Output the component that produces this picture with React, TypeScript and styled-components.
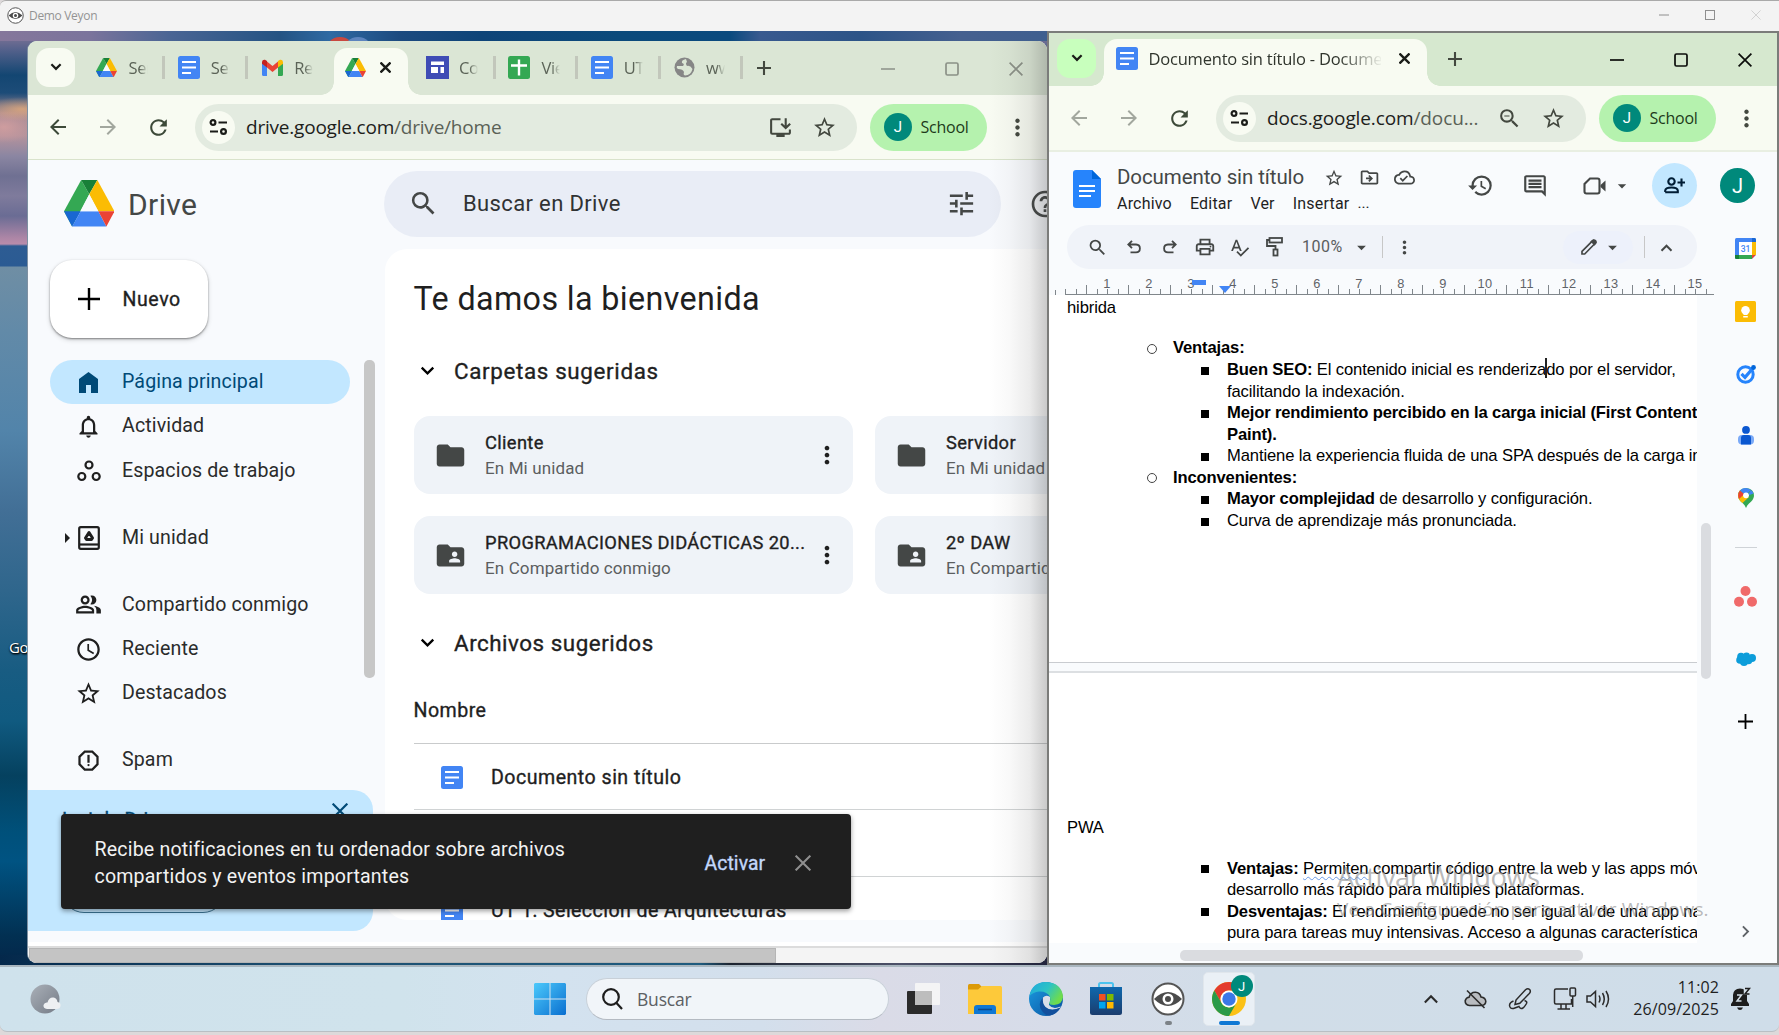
import React from 'react';
import styled, { createGlobalStyle, css } from 'styled-components';
import {
  MdSearch, MdTune, MdNotificationsNone, MdAccessTime, MdStarBorder, MdFolder, MdFolderShared,
  MdMoreVert, MdHelpOutline, MdHistory,
  MdOutlineComment, MdOutlinePrint, MdSpellcheck, MdArrowDropDown, MdArrowBack, MdArrowForward,
  MdRefresh, MdZoomOut, MdOutlineReport, MdOutlineDriveFileMove, MdOutlineCloudDone,
  MdInstallDesktop, MdOutlinePeopleAlt, MdChevronRight,
} from 'react-icons/md';

const UI = "'Open Sans', 'Noto Sans', sans-serif";
const GS = "Roboto, 'Noto Sans', sans-serif";
const ARIAL = "'Liberation Sans', Arial, sans-serif";

const Global = createGlobalStyle`
  * { box-sizing: border-box; }
  body { margin: 0; overflow: hidden; font-family: ${GS}; }
  svg { display: block; flex: none; }
`;

/* ---------- primitives ---------- */

const Screen = styled.div`
  width: 1779px; height: 1035px; display: flex; flex-direction: column; overflow: hidden; background: #ddd9da;
`;
const Slot = styled.div<{ $w: number; $c?: string }>`
  flex: none; width: ${p => p.$w}px; display: flex; align-items: center; justify-content: center;
  color: ${p => p.$c || 'inherit'};
`;
const Gap = styled.div<{ $w: number }>`flex: none; width: ${p => p.$w}px;`;
const Label = styled.span<{ $s: number; $ls?: number; $c?: string; $f?: string; $dy?: number }>`
  font-family: ${p => p.$f || GS}; font-size: ${p => p.$s}px; letter-spacing: ${p => p.$ls || 0}px;
  color: ${p => p.$c || '#1f1f1f'}; font-weight: 400; white-space: nowrap; line-height: 1.25;
  padding-top: ${p => p.$dy || 0}px;
`;
/* sits between the regular and medium weights */
const Medium = styled(Label)`-webkit-text-stroke: 0.35px currentColor;`;

/* ---------- viewer title bar ---------- */

const TitleBar = styled.header`
  flex: none; height: 31px; display: flex; align-items: center; background: #f3f3f3;
  border-top: 1px solid #a9a9a9; border-radius: 6px 0 0 0; padding: 0 0 2px 7px;
`;
const Spacer = styled.div`flex: 1;`;

/* ---------- desktop ---------- */

const Desktop = styled.main`
  flex: none; height: 934px; position: relative; overflow: hidden;
  background:
    radial-gradient(ellipse 40px 12px at 22px 78px, rgba(233,174,120,.75), transparent),
    radial-gradient(ellipse 30px 16px at 4px 96px, rgba(214,160,160,.8), transparent),
    linear-gradient(180deg, #8a7898 0, #56628c 18px, #134672 44px, #1d4c78 62px, #a98a94 82px, #b4929c 105px,
      #8b86a2 125px, #6f7092 145px, #7f7b9c 165px, #6a6c94 185px, #ad86a6 207px, #b98cab 213px, #2d5c93 215px,
      #2b5b93 235px, #6f8ea4 236px, #628aa8 300px, #5284aa 400px, #426f96 480px, #2f668c 560px, #185c82 640px,
      #105a80 690px, #05415f 745px, #00507a 800px, #005382 830px, #023052 905px, #04264a 934px);
`;
const SkyStrip = styled.div`
  height: 10px;
  background: linear-gradient(90deg, #85779b 0, #7b749c 90px, #4a6594 170px, #245383 280px, #2f6aa3 330px, #1c4a7f 400px,
    #0e4478 480px, #0b4a7b 620px, #0a4a7e 730px, #38598f 760px, #2c5487 860px, #45608f 960px, #3f5f8f 1049px);
`;
const FloorStrip = styled.div`
  position: absolute; left: 0; bottom: 0; width: 1047px; height: 10px;
  background: linear-gradient(90deg, #04284b, #1d4f70 300px, #1f5b7e 700px, #1d2430 730px, #4d5169 900px, #22243c 1047px);
`;
const ShortcutPeek = styled.div<{ $x: number; $c: string }>`
  position: absolute; left: ${p => p.$x}px; top: 6px; width: 30px; height: 30px; border-radius: 50%; background: ${p => p.$c};
`;
const ShortcutName = styled.span`
  position: absolute; left: 9px; top: 606px; font: 15px ${UI}; color: #fff; letter-spacing: -0.3px;
  text-shadow: 0 1px 2px #000, 1px 1px 2px #000;
`;

/* ---------- browser chrome ---------- */

const BrowserWindow = styled.section<{ $front?: boolean }>`
  position: absolute; display: flex; flex-direction: column; overflow: hidden;
  ${p => p.$front
    ? css`left: 1047px; top: 0; width: 732px; height: 934px; border: 2px solid #7b7c7a;`
    : css`left: 28px; top: 10px; width: 1019px; height: 922px; border-radius: 9px 9px 9px 9px; box-shadow: -1px 0 0 #7e90a2;`}
  background: #f8fbf2;
`;
const EdgeShade = styled.div`
  position: absolute; right: 0; top: 0; width: 58px; height: 100%; pointer-events: none;
  background: linear-gradient(90deg, transparent, rgba(60,60,60,.03) 35%, rgba(60,60,60,.1) 70%, rgba(60,60,60,.27));
`;
const TabStrip = styled.div<{ $front?: boolean }>`
  flex: none; height: ${p => (p.$front ? 53 : 54)}px; display: flex;
  background: ${p => (p.$front ? '#d6e8cf' : '#dbe6d5')};
  padding-top: ${p => (p.$front ? 6 : 7)}px; padding-left: 8px;
`;
const TabSearch = styled.div<{ $front?: boolean }>`
  flex: none; width: 39px; height: 39px; border-radius: 13px; display: grid; place-items: center;
  background: ${p => (p.$front ? '#c8ffbd' : '#f8fbf2')}; color: #1a1c18;
`;
const Tab = styled.div`
  flex: none; width: 82.35px; height: 39px; display: flex; align-items: center; padding-left: 15px;
`;
const FadeText = styled.div<{ $w: number }>`
  width: ${p => p.$w}px; overflow: hidden; margin-left: 11px; padding-top: 2px;
  mask-image: linear-gradient(90deg, #000 55%, transparent 100%);
`;
const LongFade = styled(FadeText)`mask-image: linear-gradient(90deg, #000 82%, transparent 101%);`;
const TabDivider = styled.i`width: 3px; height: 23px; background: #c2c7bb; margin-left: auto; margin-right: -2.5px;`;
const ActiveTab = styled.div<{ $w: number; $ml: number; $mr: number }>`
  position: relative; flex: none; width: ${p => p.$w}px; margin-left: ${p => p.$ml}px; margin-right: ${p => p.$mr}px;
  height: 100%; background: #f8fbf2; border-radius: 13px 13px 0 0;
  display: flex; align-items: center; padding: 0 0 8px 11.5px;
  &::before, &::after { content: ''; position: absolute; bottom: 0; width: 13px; height: 13px; }
  &::before { left: -13px; background: radial-gradient(circle at 0 0, transparent 12.5px, #f8fbf2 13px); }
  &::after { right: -13px; background: radial-gradient(circle at 100% 0, transparent 12.5px, #f8fbf2 13px); }
`;
const TabTools = styled.div`display: flex; align-items: center; height: 39px;`;
const WindowButtons = styled.div<{ $c: string }>`
  margin-left: auto; display: flex; align-items: center; height: 41px; color: ${p => p.$c};
`;
const AddressRow = styled.div<{ $front?: boolean }>`
  flex: none; height: ${p => (p.$front ? 66 : 65)}px; display: flex; align-items: center; background: #f8fbf2;
  border-bottom: ${p => (p.$front ? '2px solid #e9efe2' : '1px solid #d9e3cb')}; color: #43483f;
`;
const Omnibox = styled.div<{ $w: number }>`
  flex: none; width: ${p => p.$w}px; height: 47px; border-radius: 24px; background: #e3ebe0; display: flex; align-items: center; padding-left: 7px;
`;
const UrlPath = styled.span`color: #5a6156;`;
const SiteChip = styled.div`
  flex: none; width: 33px; height: 33px; border-radius: 50%; background: #f8fbf2; display: grid; place-items: center; margin-right: 11px;
`;
const Profile = styled.div`
  flex: none; width: 117px; height: 47px; border-radius: 24px; background: #b5f2ae; display: flex; align-items: center; padding-left: 14px; gap: 8.5px;
`;
const Avatar = styled.div<{ $d: number; $s: number }>`
  flex: none; width: ${p => p.$d}px; height: ${p => p.$d}px; border-radius: 50%; background: #00897b; color: #fff;
  font: 400 ${p => p.$s}px ${GS}; display: grid; place-items: center;
`;

/* ---------- icons ---------- */

const DriveLogo = ({ w }: { w: number }) => (
  <svg width={w} height={w * 0.92} viewBox="0 0 50 46">
    <path d="M17 0 L25 14 L8 46 L0 31 Z" fill="#34a853" />
    <path d="M17 0 H33 L25 14 Z" fill="#188038" />
    <path d="M33 0 L50 31 H34 L25 14 Z" fill="#fbbc04" />
    <path d="M0 31 H16.5 L8 46 Z" fill="#1967d2" />
    <path d="M16.5 31 H34 L42 46 H8 Z" fill="#4285f4" />
    <path d="M34 31 H50 L42 46 Z" fill="#ea4335" />
    <path d="M25 14 L34 31 H16.5 Z" fill="#f8fafd" />
  </svg>
);
const DocsTile = () => (
  <svg width="22" height="23" viewBox="0 0 22 23">
    <rect width="22" height="23" rx="2.5" fill="#4285f4" />
    <path d="M4 6H18M4 11.5H18M4 17H13" stroke="#fff" strokeWidth="2.2" />
  </svg>
);
const GmailIcon = () => (
  <svg width="21" height="17" viewBox="0 0 21 17">
    <path d="M0 3V15.5Q0 17 1.5 17H5V7Z" fill="#4285f4" />
    <path d="M21 3V15.5Q21 17 19.5 17H16V7Z" fill="#34a853" />
    <path d="M5 2.5L10.5 7L16 2.5V8.5L10.5 13L5 8.5Z" fill="#ea4335" />
    <path d="M0 3Q.3 .3 3 .7L5 2V8.5L0 4.8Z" fill="#c5221f" />
    <path d="M21 3Q20.7 .3 18 .7L16 2V8.5L21 4.8Z" fill="#fbbc04" />
  </svg>
);
const SitesIcon = () => (
  <svg width="23" height="23" viewBox="0 0 23 23">
    <rect width="23" height="23" fill="#3f4cb5" />
    <path d="M5 5.5H18V9H5ZM5 11H12V17H5ZM14.5 11H18V17H14.5Z" fill="#fff" />
  </svg>
);
const SheetsIcon = () => (
  <svg width="22" height="23" viewBox="0 0 22 23">
    <rect width="22" height="23" rx="2.5" fill="#34a853" />
    <path d="M11 3.5V19.5M3 9.5H19" stroke="#fff" strokeWidth="2.4" />
  </svg>
);
const GlobeIcon = () => (
  <svg width="21" height="21" viewBox="0 0 21 21">
    <circle cx="10.5" cy="10.5" r="10" fill="#868686" />
    <path d="M12 2Q7 3 8 6Q11 7 9 9H3Q2 11 4 12Q9 12 10 15Q9 18 11 18.5Q17 18 18.5 12Q16 8 13 9Q11 6 13 5Z" fill="#dbe6d5" />
  </svg>
);
const SiteSettings = () => (
  <svg width="19" height="18" viewBox="0 0 19 18" fill="none" stroke="#1a1c18" strokeWidth="2.2">
    <circle cx="4" cy="4.5" r="2.4" /><path d="M9.5 4.5H18M1 13.5H9" /><circle cx="14.5" cy="13.5" r="2.4" />
  </svg>
);
const PlusIcon = ({ s, sw }: { s: number; sw: number }) => (
  <svg width={s} height={s} viewBox={`0 0 ${s} ${s}`}><path d={`M0 ${s / 2}H${s}M${s / 2} 0V${s}`} stroke="currentColor" strokeWidth={sw} /></svg>
);
const MinIcon = () => <svg width="14" height="14" viewBox="0 0 14 14"><path d="M0 7H14" stroke="currentColor" strokeWidth="1.7" /></svg>;
const MaxIcon = () => <svg width="14" height="14" viewBox="0 0 14 14"><rect x="1" y="1" width="12" height="12" rx="1.5" fill="none" stroke="currentColor" strokeWidth="1.7" /></svg>;
const XIcon = ({ s = 14, sw = 1.7 }: { s?: number; sw?: number }) => (
  <svg width={s} height={s} viewBox="0 0 14 14"><path d="M.6 .6L13.4 13.4M13.4 .6L.6 13.4" stroke="currentColor" strokeWidth={sw} /></svg>
);
const Chevron = ({ w = 12, sw = 2.4, up = false }: { w?: number; sw?: number; up?: boolean }) => (
  <svg width={w} height={w * 0.7} viewBox="0 0 14 10"><path d={up ? 'M1.5 8.5L7 3L12.5 8.5' : 'M1.5 1.5L7 7L12.5 1.5'} stroke="currentColor" strokeWidth={sw} fill="none" /></svg>
);
const EyeIcon = ({ w, h }: { w: number; h: number }) => (
  <svg width={w} height={h} viewBox="0 0 34 34">
    <circle cx="17" cy="17" r="15.5" fill="#fff" stroke="#555" strokeWidth="2" />
    <path d="M3 17Q10 10 17 10Q24 10 31 17Q24 24 17 24Q10 24 3 17Z" fill="#4b4b4b" />
    <circle cx="17" cy="17" r="5.5" fill="#fff" /><circle cx="17" cy="17" r="3" fill="#4b4b4b" />
  </svg>
);
const HomeIcon = () => (
  <svg width="19" height="21" viewBox="0 0 19 21"><path d="M0 7L9.5 0L19 7V21H12V13H7V21H0Z" fill="#004a77" /></svg>
);
const SpacesIcon = () => (
  <svg width="24" height="22" viewBox="0 0 24 22" fill="none" stroke="#1f1f1f" strokeWidth="2.2">
    <circle cx="12" cy="5" r="3.5" /><circle cx="4.8" cy="16.5" r="3.5" /><circle cx="19.2" cy="16.5" r="3.5" />
  </svg>
);
const MyDriveIcon = () => (
  <svg width="22" height="24" viewBox="0 0 22 24" fill="none" stroke="#1f1f1f" strokeWidth="2.2">
    <rect x="1.2" y="1.2" width="19.6" height="21.6" rx="1.5" /><path d="M1 18.5H21" />
    <path d="M11 6.5L7.5 12L8.5 13.5H13.5L14.5 12Z" strokeWidth="3" strokeLinejoin="round" />
  </svg>
);
const ExpandIcon = () => <svg width="5" height="10" viewBox="0 0 5 10"><path d="M0 0L5 5L0 10Z" fill="#1f1f1f" /></svg>;
const DocsFile = () => (
  <svg width="28" height="38" viewBox="0 0 28 38">
    <path d="M3 0H19L28 9V35Q28 38 25 38H3Q0 38 0 35V3Q0 0 3 0Z" fill="#2684fc" />
    <path d="M19 0L28 9H19Z" fill="#0066da" />
    <path d="M6 16H22M6 21H22M6 26H18" stroke="#fff" strokeWidth="2" />
  </svg>
);
const CameraIcon = () => (
  <svg width="23" height="18" viewBox="0 0 23 18" fill="none" stroke="#444746" strokeWidth="2.1">
    <path d="M7 1.5H14.5Q16.5 1.5 16.5 3.5V14.5Q16.5 16.5 14.5 16.5H3.5Q1.5 16.5 1.5 14.5V7Z" />
    <path d="M17.5 8L22.5 3.5V14.5L17.5 10Z" fill="#444746" stroke="none" />
  </svg>
);
const AddPerson = () => (
  <svg width="21" height="17" viewBox="0 0 21 17" fill="none" stroke="#001d35" strokeWidth="2.1">
    <circle cx="7.5" cy="4.5" r="3.2" /><path d="M1.2 15V13.5Q1.5 10.5 7.5 10.5Q13.5 10.5 13.8 13.5V15.2H1.2M17.5 1.5V9.5M13.5 5.5H21" />
  </svg>
);
const UndoIcon = ({ flip }: { flip?: boolean }) => (
  <svg width="14" height="14" viewBox="0 0 14 14" fill="none" stroke="#444746" strokeWidth="1.8" transform={flip ? 'scale(-1 1)' : undefined}>
    <path d="M5 .8L1.3 4.5L5 8.2M1.5 4.5H9Q12.9 4.7 12.9 8.4Q12.9 12.2 9 12.3H3.5" />
  </svg>
);
const RollerIcon = () => (
  <svg width="17" height="20" viewBox="0 0 17 20" fill="none" stroke="#444746" strokeWidth="1.8">
    <rect x="3.5" y="1" width="12.5" height="4.5" /><path d="M3.5 3H1V9H9.5V12" /><rect x="7.5" y="12.5" width="4" height="6" />
  </svg>
);
const PencilIcon = () => (
  <svg width="16" height="16" viewBox="0 0 16 16" fill="none" stroke="#444746" strokeWidth="1.7">
    <path d="M1 15V12.3L11.5 1.8Q12.5 .8 13.7 1.9Q15 3.2 14.2 4.3L3.7 15Z" /><path d="M10.5 2.5L13.5 5.5L15 3.5Q15 1 12.5 1Z" fill="#444746" />
  </svg>
);
const CalendarIcon = () => (
  <svg width="21" height="21" viewBox="0 0 21 21">
    <rect width="21" height="21" rx="1.5" fill="#4285f4" /><path d="M17 4H21V17H17Z" fill="#fbbc04" /><path d="M17 0H19.5Q21 0 21 1.5V4H17Z" fill="#1967d2" />
    <path d="M4 17H17V21H4Z" fill="#34a853" /><path d="M0 17H4V21H1.5Q0 21 0 19.5Z" fill="#188038" /><path d="M17 17H21L17 21Z" fill="#ea4335" /><path d="M21 17V21H17Z" fill="#f9fbfd" />
    <rect x="4" y="4" width="13" height="13" fill="#fff" />
    <text x="10.5" y="13.6" fontSize="8.5" fontFamily="Roboto, sans-serif" fontWeight="500" textAnchor="middle" fill="#4285f4">31</text>
  </svg>
);
const KeepIcon = () => (
  <svg width="21" height="21" viewBox="0 0 21 21">
    <rect width="21" height="21" rx="1.5" fill="#fbbc04" /><circle cx="10.5" cy="9.3" r="4.3" fill="#fff" /><path d="M8.5 12H12.5V14H8.5ZM8.2 15H12.8V16.5H8.2Z" fill="#fff" />
  </svg>
);
const TasksIcon = () => (
  <svg width="20" height="20" viewBox="0 0 20 20">
    <circle cx="9.5" cy="10.5" r="7.7" fill="none" stroke="#2684fc" strokeWidth="3" />
    <path d="M5.5 9.8L9 13.3L17.5 3.5" fill="none" stroke="#2684fc" strokeWidth="3.2" /><circle cx="17.5" cy="3.5" r="2.4" fill="#0066da" />
  </svg>
);
const ContactIcon = () => (
  <svg width="16" height="19" viewBox="0 0 16 19">
    <rect x="0" y="9" width="16" height="9.5" rx="4" fill="#7baaf7" /><path d="M3 18.5V12Q3 9 6 9H10Q13 9 13 12V18.5Z" fill="#0b57d0" /><circle cx="8" cy="3.9" r="3.9" fill="#0b57d0" />
  </svg>
);
const MapsIcon = () => (
  <svg width="16" height="20" viewBox="0 0 16 20">
    <path d="M8 0Q16 .5 16 8Q15.5 12 11 15.5Q9 17 8 20Q7 17 5 15.5Q.5 12 0 8Q0 .5 8 0Z" fill="#34a853" />
    <path d="M2 2.5L5.5 5.5L11 9L4.5 15Q.5 12 0 8Q0 5 2 2.5Z" fill="#fbbc04" /><path d="M2 2.5L6.5 6L1 11Q-1 6 2 2.5Z" fill="#ea4335" />
    <path d="M2 2.5Q7 -2 13 2L8 7L5.5 5.5Z" fill="#4285f4" /><path d="M13 2Q15 3.5 15.5 5.5L9 8Z" fill="#4285f4" /><circle cx="8" cy="7.3" r="2.9" fill="#fff" />
  </svg>
);
const AsanaIcon = () => (
  <svg width="23" height="21" viewBox="0 0 23 21" fill="#f06a6a"><circle cx="11.5" cy="5" r="5" /><circle cx="5" cy="15.8" r="5" /><circle cx="18" cy="15.8" r="5" /></svg>
);
const SalesforceIcon = () => (
  <svg width="20" height="14" viewBox="0 0 20 14" fill="#0d9dda"><circle cx="5" cy="4.5" r="3.8" /><circle cx="10.5" cy="3.8" r="3.4" /><circle cx="16" cy="6" r="4" /><circle cx="4" cy="8" r="3.8" /><circle cx="8" cy="10" r="4" /><circle cx="12.5" cy="8.5" r="3.8" /></svg>
);

/* ---------- drive page ---------- */

const DriveHeader = styled.div`
  flex: none; height: 89px; background: #f8fafd; display: flex; align-items: center; padding-bottom: 2px; color: #444746; overflow: hidden;
`;
const DriveSearch = styled.div`
  flex: none; width: 617px; height: 66px; border-radius: 33px; background: #e9edf6; display: flex; align-items: center;
`;
const HelpSlot = styled(Slot)`& > svg { margin-left: 12px; }`;
const DriveBody = styled.div`flex: none; height: 693px; display: flex; background: #f8fafd;`;
const Sidebar = styled.aside`flex: none; width: 357px; padding-top: 11px; display: flex; flex-direction: column;`;
const NewButton = styled.div`
  flex: none; margin-left: 22px; width: 158px; height: 78px; border-radius: 22px; background: #fff; display: flex; align-items: center;
  box-shadow: 0 1px 2px rgba(0,0,0,.42), 0 2px 5px rgba(0,0,0,.16); padding-left: 20px;
`;
const NavArea = styled.div`flex: none; height: 430px; margin-top: 22px; padding-left: 22px; display: flex; overflow: hidden;`;
const NavList = styled.nav`flex: none; width: 300px; display: flex; flex-direction: column; gap: 22.5px;`;
const NavItem = styled.div<{ $on?: boolean }>`
  position: relative; height: 44.4px; border-radius: 23px; display: flex; align-items: center; padding-left: 19.7px;
  background: ${p => (p.$on ? '#c2e7ff' : 'transparent')};
`;
const ExpandMark = styled.div`position: absolute; left: 15px; top: 17px;`;
const NavThumb = styled.div`margin-left: 14px; width: 11px; height: 318px; border-radius: 5px; background: #c7c7c7;`;
const PromoCard = styled.div`
  flex: none; width: 345px; height: 141px; border-radius: 0 20px 20px 0; background: #c2e7ff; padding: 17px 25px 0 34px; color: #004a77;
  display: flex; justify-content: space-between; position: relative;
  & > svg { margin-top: -4px; }
`;
const PromoButton = styled.div`position: absolute; left: 34px; bottom: 18px; width: 163px; height: 44px; border-radius: 22px; border: 1px solid #39708f;`;
const Panel = styled.div`
  flex: none; width: 662px; height: 671px; background: #fff; border-radius: 22px 0 0 22px; padding-left: 28.5px; overflow: hidden;
`;
const Welcome = styled.div`height: 102px; padding-bottom: 2px; display: flex; align-items: center;`;
const SectionHead = styled.div`height: 40px; display: flex; align-items: center;`;
const CardGrid = styled.div`
  margin: 25px 0 29px; display: grid; grid-template-columns: 439px 439px; gap: 22px; grid-auto-rows: 78px; width: 900px;
`;
const FolderCard = styled.div`
  border-radius: 16px; background: #eff3f8; display: flex; align-items: center; padding-left: 19.5px;
`;
const CardText = styled.div`flex: none; display: flex; flex-direction: column; gap: 3px; width: 328px; margin-left: 18px; padding-top: 1px;`;
const ColumnHead = styled.div`height: 81px; padding-top: 16px; display: flex; align-items: center; border-bottom: 1px solid #c9cbcc;`;
const FileRow = styled.div`
  height: 66.4px; display: flex; align-items: center; border-bottom: 1px solid #d0d3d4; padding: 2px 0 0 27px; gap: 28.5px;
`;
const PageFoot = styled.div`flex: none; height: 4px; background: #fff;`;
const HScroll = styled.div`
  flex: none; height: 17px; border-top: 2px solid #dcdcdc; background: #f4f4f4; padding: 0 0 0 1px;
  & > i { display: block; width: 747px; height: 15px; background: #c4c4c4; border: 1px solid #b5b5b5; }
`;
const Toast = styled.div`
  position: absolute; left: 33px; top: 773px; width: 789.5px; height: 94.5px; border-radius: 4px; background: #1f1f1f;
  box-shadow: 0 2px 5px rgba(0,0,0,.4); display: flex; align-items: center; padding: 3px 0 0 33.5px;
`;
const ToastText = styled.div`flex: none; width: 610px; display: flex; flex-direction: column; & > span { line-height: 27px; }`;

const navGroups = [
  [
    { t: 'Página principal', i: <HomeIcon />, on: true },
    { t: 'Actividad', i: <MdNotificationsNone size={27} /> },
    { t: 'Espacios de trabajo', i: <SpacesIcon /> },
  ],
  [{ t: 'Mi unidad', i: <MyDriveIcon />, ex: true }],
  [
    { t: 'Compartido conmigo', i: <MdOutlinePeopleAlt size={27} /> },
    { t: 'Reciente', i: <MdAccessTime size={27} /> },
    { t: 'Destacados', i: <MdStarBorder size={27} /> },
  ],
  [{ t: 'Spam', i: <MdOutlineReport size={27} /> }],
] as { t: string; i: React.ReactNode; on?: boolean; ex?: boolean }[][];

const folders = [
  { t: 'Cliente', s: 'En Mi unidad' },
  { t: 'Servidor', s: 'En Mi unidad' },
  { t: 'PROGRAMACIONES DIDÁCTICAS 20...', s: 'En Compartido conmigo', shared: true },
  { t: '2º DAW', s: 'En Compartido conmigo', shared: true },
] as { t: string; s: string; shared?: boolean }[];

const SmallTab = ({ icon, text, divider = true }: { icon: React.ReactNode; text: string; divider?: boolean }) => (
  <Tab>
    <Slot $w={22}>{icon}</Slot>
    <FadeText $w={19}><Label $f={UI} $s={16.5} $ls={-0.3} $c="#5b6357">{text}</Label></FadeText>
    {divider && <TabDivider />}
  </Tab>
);

const School = () => (
  <Profile>
    <Avatar $d={28} $s={15}>J</Avatar>
    <Label $f={UI} $s={16} $ls={-0.25} $c="#1d3a1a">School</Label>
  </Profile>
);

const DriveWindow = () => (
  <BrowserWindow>
    <TabStrip>
      <TabSearch><Chevron w={12} sw={2.6} /></TabSearch>
      <Gap $w={5.5} />
      <SmallTab icon={<DriveLogo w={21} />} text="Ser" />
      <SmallTab icon={<DocsTile />} text="Ser" />
      <Gap $w={1} />
      <SmallTab icon={<GmailIcon />} text="Re" divider={false} />
      <ActiveTab $w={74} $ml={5} $mr={3.5}>
        <DriveLogo w={21} /><Gap $w={12} /><Slot $w={14} $c="#1a1c18"><XIcon s={11} sw={3} /></Slot>
      </ActiveTab>
      <SmallTab icon={<SitesIcon />} text="Co" />
      <SmallTab icon={<SheetsIcon />} text="Vie" />
      <SmallTab icon={<DocsTile />} text="UT" />
      <SmallTab icon={<GlobeIcon />} text="ww" />
      <TabTools><Slot $w={47} $c="#43483f"><PlusIcon s={14} sw={2.1} /></Slot></TabTools>
      <WindowButtons $c="#8b9187">
        <Slot $w={64}><MinIcon /></Slot><Slot $w={64}><MaxIcon /></Slot><Slot $w={63}><XIcon /></Slot>
      </WindowButtons>
    </TabStrip>
    <AddressRow>
      <Gap $w={5} />
      <Slot $w={50} $c="#3d4a39"><MdArrowBack size={24} /></Slot>
      <Slot $w={50} $c="#a2a79e"><MdArrowForward size={24} /></Slot>
      <Slot $w={50} $c="#3d4a39"><MdRefresh size={25} /></Slot>
      <Gap $w={12} />
      <Omnibox $w={662}>
        <SiteChip><SiteSettings /></SiteChip>
        <Label $f={UI} $s={19} $ls={-0.21} $dy={1} $c="#1d211b">drive.google.com<UrlPath>/drive/home</UrlPath></Label>
        <Spacer />
        <Slot $w={44}><MdInstallDesktop size={25} /></Slot><Slot $w={44}><MdStarBorder size={25} /></Slot><Gap $w={11} />
      </Omnibox>
      <Gap $w={13} />
      <School />
      <Slot $w={60}><MdMoreVert size={27} /></Slot>
    </AddressRow>
    <DriveHeader>
      <Gap $w={35.5} /><DriveLogo w={50.5} /><Gap $w={14} />
      <Label $s={30} $ls={0.4} $dy={3} $c="#444746">Drive</Label>
      <Spacer />
      <DriveSearch>
        <Gap $w={24.5} /><Slot $w={30}><MdSearch size={31} /></Slot><Gap $w={24.5} />
        <Label $s={22} $ls={0.36} $dy={1} $c="#303233">Buscar en Drive</Label>
        <Spacer /><MdTune size={31} /><Gap $w={24} />
      </DriveSearch>
      <Gap $w={29} /><HelpSlot $w={17}><MdHelpOutline size={32} /></HelpSlot>
    </DriveHeader>
    <DriveBody>
      <Sidebar>
        <NewButton>
          <Slot $w={38}><PlusIcon s={22} sw={2.4} /></Slot><Gap $w={14.5} />
          <Medium $s={19.5} $ls={0.6} $dy={2}>Nuevo</Medium>
        </NewButton>
        <NavArea>
          <NavList>
            {navGroups.map((g, k) => (
              <div key={k}>
                {g.map(n => (
                  <NavItem key={n.t} $on={n.on}>
                    {n.ex && <ExpandMark><ExpandIcon /></ExpandMark>}
                    <Slot $w={38} $c="#1f1f1f">{n.i}</Slot><Gap $w={14.3} />
                    <Label $s={19.6} $ls={0.12} $c={n.on ? '#004a77' : '#2a2b2b'}>{n.t}</Label>
                  </NavItem>
                ))}
              </div>
            ))}
          </NavList>
          <NavThumb />
        </NavArea>
        <PromoCard>
          <Medium $s={19} $ls={0.1} $c="#004a77">Instala Drive</Medium>
          <XIcon s={16} sw={1.9} />
          <PromoButton />
        </PromoCard>
      </Sidebar>
      <Panel>
        <Welcome><Label $s={32.3} $ls={0.36} $dy={1}>Te damos la bienvenida</Label></Welcome>
        <SectionHead><Slot $w={28}><Chevron w={15} sw={2.2} /></Slot><Gap $w={12.5} /><Medium $s={22.4} $ls={0.64}>Carpetas sugeridas</Medium></SectionHead>
        <CardGrid>
          {folders.map(f => (
            <FolderCard key={f.t}>
              <Slot $w={34} $c="#444746">{f.shared ? <MdFolderShared size={33} /> : <MdFolder size={33} />}</Slot>
              <CardText>
                <Medium $s={18.3} $ls={0.35}>{f.t}</Medium>
                <Label $s={17} $ls={0.12} $c="#5b5e5f">{f.s}</Label>
              </CardText>
              <Slot $w={28} $c="#1f1f1f"><MdMoreVert size={28} /></Slot>
            </FolderCard>
          ))}
        </CardGrid>
        <SectionHead><Slot $w={28}><Chevron w={15} sw={2.2} /></Slot><Gap $w={12.5} /><Medium $s={22.4} $ls={0.52}>Archivos sugeridos</Medium></SectionHead>
        <ColumnHead><Medium $s={19.6} $ls={0.45}>Nombre</Medium></ColumnHead>
        <FileRow><DocsTile /><Medium $s={19.6} $ls={0.48} $dy={1}>Documento sin título</Medium></FileRow>
        <FileRow />
        <FileRow><DocsTile /><Medium $s={19.6} $ls={0.42} $dy={1}>UT 1: Selección de Arquitecturas</Medium></FileRow>
      </Panel>
    </DriveBody>
    <PageFoot />
    <HScroll><i /></HScroll>
    <Toast>
      <ToastText>
        <Label $s={19.6} $ls={0.17} $c="#f2f2f2">Recibe notificaciones en tu ordenador sobre archivos</Label>
        <Label $s={19.6} $ls={0.17} $c="#f2f2f2">compartidos y eventos importantes</Label>
      </ToastText>
      <Medium $s={19.3} $ls={0.12} $dy={2} $c="#c2d7fb">Activar</Medium>
      <Spacer />
      <Slot $w={16} $c="#8f8f8f"><XIcon s={16} sw={1.8} /></Slot>
      <Gap $w={40} />
    </Toast>
    <EdgeShade />
  </BrowserWindow>
);

/* ---------- docs page ---------- */

const DocsHeader = styled.div`flex: none; height: 73px; background: #f9fbfd; display: flex; padding: 0 0 0 23.5px; color: #444746;`;
const DocsTitle = styled.div`flex: none; width: 330px; margin-left: 16px; padding-top: 10px;`;
const DocsTitleRow = styled.div`height: 31px; display: flex; align-items: center;`;
const MenuRow = styled.div`height: 21px; display: flex; align-items: center; gap: 18px; white-space: nowrap;`;
const MoreMenus = styled(Label)`margin-left: -10px;`;
const DocsActions = styled.div`margin-left: auto; display: flex; align-items: center; height: 67px;`;
const ShareButton = styled.div`width: 45px; height: 45px; border-radius: 50%; background: #c2e7ff; display: grid; place-items: center;`;
const DocsBody = styled.div`flex: none; height: 718px; display: flex; background: #f9fbfd;`;
const DocsMain = styled.div`flex: none; width: 666px;`;
const FormatBar = styled.div`
  margin-left: 17.5px; width: 630px; height: 43.5px; border-radius: 22px; background: #f0f3f9; display: flex; align-items: center; color: #444746;
  padding-top: 1px;
`;
const ModePill = styled.div`width: 70px; height: 33px; border-radius: 17px; background: #edf1fb; display: flex; align-items: center; padding-left: 18px; gap: 5px;`;
const BarDivider = styled.i`flex: none; width: 1.5px; height: 22px; background: #c7c7c7;`;
const Ruler = styled.div`position: relative; height: 26.5px; margin-left: 5.5px; display: flex; align-items: flex-end; overflow: hidden;`;
const RulerTrack = styled.div`display: flex; border-bottom: 1.5px solid #80868b; width: 649px; overflow: hidden;`;
const Cm = styled.div<{ $w: number }>`
  flex: none; width: ${p => p.$w}px; height: 24px; display: flex; flex-direction: column; justify-content: space-between; font: 12.8px ${ARIAL};
  color: #5f6368; text-align: center; letter-spacing: .5px;
  & > span { margin-top: 5px; line-height: 17px; }
`;
const Ticks = styled.div`
  display: flex; align-items: flex-end; height: 9px; margin-top: -7px;
  & > i { flex: none; width: 10.5px; height: 5px; border-left: 1px solid #80868b; }
  & > i.tall { height: 9px; }
`;
const FirstLineMark = styled.i`position: absolute; left: 137.5px; top: 11px; width: 13.5px; height: 5px; background: #4285f4;`;
const IndentMark = styled.i`
  position: absolute; left: 164.5px; top: 17px; border: 6.5px solid transparent; border-top: 7px solid #4285f4; border-bottom: 0;
`;
const Canvas = styled.div`height: 648px; display: flex;`;
const Page = styled.article`
  flex: none; width: 648px; overflow: hidden; background: #fff; color: #000; font: 16.6px/21.55px ${ARIAL}; letter-spacing: -0.12px; white-space: nowrap;
  & b { letter-spacing: -0.15px; }
`;
const Para = styled.p<{ $mb: number; $mt?: number }>`margin: ${p => p.$mt || 0}px 0 ${p => p.$mb}px 18px;`;
const Line = styled.div<{ $lv: 1 | 2 }>`
  display: flex; padding-left: ${p => (p.$lv === 1 ? 98 : 152)}px;
  & > i { flex: none; width: 26px; font-style: normal; font-size: 10px; color: #000; }
`;
const Ring = styled.i`&&& { display: flex; align-items: center; } &::before { content: ''; width: 8px; height: 8px; border: 1px solid #444; border-radius: 50%; margin-top: 1px; }`;
const Square = styled.i`&&& { display: flex; align-items: center; } &::before { content: ''; width: 8px; height: 8px; background: #000; margin-top: 2px; }`;
const Caret = styled.i`position: relative; &::before { content: ''; position: absolute; left: -1px; top: -2px; width: 1.5px; height: 20px; background: #222; }`;
const Wavy = styled.span`text-decoration: underline wavy #6a9be8 1px; text-underline-offset: 2px; text-decoration-skip-ink: none;`;
const BlankLines = styled.div`height: 130.5px;`;
const PageBreak = styled.div`height: 11px; background: #f9fbfd; border-top: 1px solid #c9ccd0; border-bottom: 2px solid #dcdfe2;`;
const VThumb = styled.div`margin: 228px 0 0 4px; width: 10px; height: 156px; border-radius: 5px; background: #dadce0;`;
const SidePanel = styled.aside`
  flex: none; width: 61px; display: flex; flex-direction: column; align-items: center;
  & > div { height: 62.2px; width: 61px; flex: none; }
`;
const SideTop = styled(Slot)`&&& { height: 47px; margin-bottom: 8.5px; }`;
const SideBottom = styled(Slot)`&&& { height: auto; margin-top: auto; }`;
const SideRule = styled.i`width: 22px; height: 1px; margin: 17.5px 0 18px; background: #cfd3d7;`;
const DocFoot = styled.div`flex: none; height: 20px; background: #f9fbfd; padding: 7px 0 0 130.5px; & > i { display: block; width: 403px; height: 11px; border-radius: 5px; background: #dadce0; }`;
const Watermark = styled.div<{ $y: number; $s: number; $ls: number }>`
  position: absolute; left: 288px; top: ${p => p.$y}px; font: ${p => p.$s}px/1.3 ${UI}; letter-spacing: ${p => p.$ls}px;
  color: rgba(140,140,140,.62); white-space: nowrap; pointer-events: none;
`;

const cms = Array.from({ length: 15 }, (_, i) => i + 1);
const QuarterTicks = () => <Ticks><i className="tall" /><i /><i /><i /></Ticks>;

const DocsWindow = () => (
  <BrowserWindow $front>
    <TabStrip $front>
      <TabSearch $front><Chevron w={12} sw={2.6} /></TabSearch>
      <ActiveTab $w={323} $ml={8} $mr={4}>
        <DocsTile />
        <LongFade $w={232}><Label $f={UI} $s={16.5} $ls={-0.2} $c="#30352d">Documento sin título - Documentos</Label></LongFade>
        <Gap $w={17} /><Slot $w={14} $c="#1a1c18"><XIcon s={11} sw={3} /></Slot>
      </ActiveTab>
      <TabTools><Slot $w={47} $c="#43483f"><PlusIcon s={14} sw={2.1} /></Slot></TabTools>
      <WindowButtons $c="#0b0c0a">
        <Slot $w={64}><MinIcon /></Slot><Slot $w={64}><MaxIcon /></Slot><Slot $w={64}><XIcon /></Slot>
      </WindowButtons>
    </TabStrip>
    <AddressRow $front>
      <Gap $w={5} />
      <Slot $w={50} $c="#a2a79e"><MdArrowBack size={24} /></Slot>
      <Slot $w={50} $c="#a2a79e"><MdArrowForward size={24} /></Slot>
      <Slot $w={50} $c="#3d4a39"><MdRefresh size={25} /></Slot>
      <Gap $w={12} />
      <Omnibox $w={370}>
        <SiteChip><SiteSettings /></SiteChip>
        <Label $f={UI} $s={19} $ls={-0.12} $dy={1} $c="#1d211b">docs.google.com<UrlPath>/docu...</UrlPath></Label>
        <Spacer />
        <Slot $w={44}><MdZoomOut size={25} /></Slot><Slot $w={45}><MdStarBorder size={25} /></Slot><Gap $w={10} />
      </Omnibox>
      <Gap $w={13} />
      <School />
      <Slot $w={61}><MdMoreVert size={27} /></Slot>
    </AddressRow>
    <DocsHeader>
      <Slot $w={28.5}><DocsFile /></Slot>
      <DocsTitle>
        <DocsTitleRow>
          <Label $s={20.5} $ls={-0.1} $c="#444746">Documento sin título</Label>
          <Gap $w={12.5} /><Slot $w={35}><MdStarBorder size={20} /></Slot><Slot $w={35}><MdOutlineDriveFileMove size={21} /></Slot><Slot $w={35}><MdOutlineCloudDone size={21} /></Slot>
        </DocsTitleRow>
        <MenuRow>
          {['Archivo', 'Editar', 'Ver', 'Insertar'].map(m => <Label key={m} $s={16} $ls={0.2}>{m}</Label>)}
          <MoreMenus $s={15.5}>...</MoreMenus>
        </MenuRow>
      </DocsTitle>
      <DocsActions>
        <Slot $w={55}><MdHistory size={27} /></Slot>
        <Slot $w={54.5}><MdOutlineComment size={26} /></Slot>
        <Gap $w={21} /><CameraIcon /><Gap $w={6} /><Slot $w={20}><MdArrowDropDown size={20} /></Slot>
        <Gap $w={20} /><ShareButton><AddPerson /></ShareButton><Gap $w={23} /><Avatar $d={35} $s={20}>J</Avatar><Gap $w={22} />
      </DocsActions>
    </DocsHeader>
    <DocsBody>
      <DocsMain>
        <FormatBar>
          <Gap $w={12.5} /><Slot $w={36}><MdSearch size={21} /></Slot>
          <Slot $w={38}><UndoIcon /></Slot><Slot $w={33}><UndoIcon flip /></Slot><Slot $w={37}><MdOutlinePrint size={22} /></Slot>
          <Slot $w={33}><MdSpellcheck size={21} /></Slot><Slot $w={36}><RollerIcon /></Slot>
          <Gap $w={10} /><Label $s={16} $ls={0.5} $c="#5a5d5e">100%</Label><Gap $w={8} /><Slot $w={22}><MdArrowDropDown size={21} /></Slot>
          <Gap $w={9} /><BarDivider /><Slot $w={42}><MdMoreVert size={21} /></Slot>
          <Spacer />
          <ModePill><PencilIcon /><MdArrowDropDown size={21} /></ModePill>
          <Gap $w={11} /><BarDivider /><Slot $w={42}><Chevron up w={13} sw={2.2} /></Slot><Gap $w={9.5} />
        </FormatBar>
        <Ruler>
          <Ticks><i /></Ticks>
          <RulerTrack>
            <Cm $w={21}><span>&nbsp;</span><Ticks><i /><i /></Ticks></Cm>
            {cms.map(n => <Cm key={n} $w={42}><span>{n}</span><QuarterTicks /></Cm>)}
          </RulerTrack>
          <FirstLineMark /><IndentMark />
        </Ruler>
        <Canvas>
          <Page>
            <Para $mt={2.4} $mb={18.5}>hibrida</Para>
            <Line $lv={1}><Ring /><b>Ventajas:</b></Line>
            <Line $lv={2}><Square /><span><b>Buen SEO:</b> El contenido inicial es renderiza<Caret />do por el servidor,</span></Line>
            <Line $lv={2}><i />facilitando la indexación.</Line>
            <Line $lv={2}><Square /><b>Mejor rendimiento percibido en la carga inicial (First Contentful</b></Line>
            <Line $lv={2}><i /><b>Paint).</b></Line>
            <Line $lv={2}><Square />Mantiene la experiencia fluida de una SPA después de la carga inicial.</Line>
            <Line $lv={1}><Ring /><b>Inconvenientes:</b></Line>
            <Line $lv={2}><Square /><span><b>Mayor complejidad</b> de desarrollo y configuración.</span></Line>
            <Line $lv={2}><Square />Curva de aprendizaje más pronunciada.</Line>
            <BlankLines />
            <PageBreak />
            <Para $mt={144.5} $mb={18.7}>PWA</Para>
            <Line $lv={2}><Square /><span><b>Ventajas:</b> <Wavy>Permiten</Wavy> compartir código entre la web y las apps móviles,</span></Line>
            <Line $lv={2}><i />desarrollo más rápido para múltiples plataformas.</Line>
            <Line $lv={2}><Square /><span><b>Desventajas:</b> El rendimiento puede no ser igual al de una app nativa</span></Line>
            <Line $lv={2}><i />pura para tareas muy intensivas. Acceso a algunas características</Line>
          </Page>
          <VThumb />
        </Canvas>
      </DocsMain>
      <SidePanel>
        <SideTop $w={61}><CalendarIcon /></SideTop>
        <Slot $w={61}><KeepIcon /></Slot>
        <Slot $w={61}><TasksIcon /></Slot><Slot $w={61}><ContactIcon /></Slot><Slot $w={61}><MapsIcon /></Slot>
        <SideRule />
        <Slot $w={61}><AsanaIcon /></Slot><Slot $w={61}><SalesforceIcon /></Slot>
        <Slot $w={61} $c="#000"><PlusIcon s={15} sw={1.8} /></Slot>
        <SideBottom $w={61} $c="#5f6368"><MdChevronRight size={23} /></SideBottom>
      </SidePanel>
    </DocsBody>
    <DocFoot><i /></DocFoot>
    <Watermark $y={826} $s={27.3} $ls={-0.5}>Activar Windows</Watermark>
    <Watermark $y={864} $s={19} $ls={0.14}>Ve a Configuración para activar Windows.</Watermark>
  </BrowserWindow>
);

/* ---------- taskbar ---------- */

const Bar = styled.footer`
  flex: none; height: 67px; display: flex; align-items: center; border-top: 2px solid #a9b6bf; border-bottom: 1px solid #b9bfc4; border-radius: 0 0 7px 7px;
  background: linear-gradient(90deg, #cfe2ec 0, #d0e3ec 400px, #d3e2ef 560px, #d3dfec 760px, #dadbe7 880px, #d6dce9 1060px, #d1dde8 1250px, #cfdde9 1779px);
`;
const BarSearch = styled.div`
  flex: none; width: 303px; height: 42px; border-radius: 21px; background: #f1f5f9; border: 1px solid #c8d0d8; border-bottom: 1.5px solid #b4bac2; display: flex; align-items: center;
`;
const AppButton = styled.div`
  position: relative; flex: none; width: 52px; height: 54px; border-radius: 5px; background: #eaf0f6; border: 1px solid #e0e6ec; display: grid; place-items: center;
  &::after { content: ''; position: absolute; bottom: 0; left: 15px; width: 21px; height: 4px; border-radius: 2px; background: #0f78d4; }
`;
const AppBadge = styled.div`position: absolute; right: 1px; top: 2px;`;
const RunningApp = styled.div`
  position: relative; flex: none; width: 61.5px; height: 54px; display: grid; place-items: center;
  &::after { content: ''; position: absolute; bottom: 1px; left: 27.5px; width: 7px; height: 4px; border-radius: 2px; background: #7c8287; }
`;
const Clock = styled.div`flex: none; display: flex; flex-direction: column; align-items: flex-end; padding-bottom: 2px; & > span { line-height: 22.3px; }`;

const WeatherIcon = () => (
  <svg width="32" height="30" viewBox="0 0 32 30">
    <defs><linearGradient id="moon" x1="0" y1="0" x2="1" y2="1"><stop offset="0" stopColor="#aab0b8" /><stop offset="1" stopColor="#747b86" /></linearGradient></defs>
    <circle cx="15" cy="15" r="14.5" fill="url(#moon)" />
    <path d="M17 25Q13 24.5 13.5 21Q14.5 18 17.5 18.5Q19 13 23.5 13.5Q27 14 27.5 18Q31 18.5 30.5 22Q30 25 26.5 25Z" fill="#eef0f2" />
  </svg>
);
const StartIcon = () => (
  <svg width="32" height="32" viewBox="0 0 32 32">
    <defs><linearGradient id="win" x1="0" y1="0" x2="1" y2="1"><stop offset="0" stopColor="#4cc9fb" /><stop offset="1" stopColor="#0a6fd0" /></linearGradient></defs>
    <path d="M1 0H15.5V15.5H0V1ZM16.5 0H31L32 1V15.5H16.5ZM0 16.5H15.5V32H1L0 31ZM16.5 16.5H32V31L31 32H16.5Z" fill="url(#win)" />
  </svg>
);
const TaskViewIcon = () => (
  <svg width="33" height="32" viewBox="0 0 33 32">
    <rect x="0" y="8" width="25" height="23" rx="1" fill="#2b2b2b" /><rect x="8" y="0" width="25" height="22" rx="1" fill="#f4f4f5" /><rect x="8" y="8" width="17" height="14" fill="#bdbdbd" />
  </svg>
);
const ExplorerIcon = () => (
  <svg width="34" height="30" viewBox="0 0 34 30">
    <path d="M0 1.5Q0 0 1.5 0H11L14 3L11 6H0Z" fill="#dc9a08" /><path d="M0 5.5H10L14 2H32.5Q34 2 34 3.5V30H0Z" fill="#fdc93a" />
    <path d="M6 30V24Q6 21 9 21H25Q28 21 28 24V30Z" fill="#0f78d4" /><path d="M10 25.5H24" stroke="#0a4a8f" strokeWidth="1.6" />
  </svg>
);
const EdgeIcon = () => (
  <svg width="34" height="34" viewBox="0 0 34 34">
    <defs>
      <linearGradient id="eg1" x1="0" y1="0" x2="1" y2=".5"><stop offset="0" stopColor="#1fa7e0" /><stop offset=".55" stopColor="#2cc3c4" /><stop offset="1" stopColor="#6fdc4c" /></linearGradient>
      <linearGradient id="eg2" x1="0" y1="0" x2="1" y2="1"><stop offset="0" stopColor="#1b9de2" /><stop offset="1" stopColor="#0a4f9e" /></linearGradient>
    </defs>
    <circle cx="17" cy="17" r="17" fill="url(#eg2)" />
    <path d="M.5 14Q3 0 17 0Q33 1 34 15Q33.5 22.5 25 23Q20 23 20 20.5Q22 18 21 15Q18 9 10 9.5Q4 10 .5 14Z" fill="url(#eg1)" />
    <path d="M21 15Q17 12.5 14 15.5Q12 19 14.5 23.5Q19 30 30 26.5Q32 25.5 31.5 24.5Q24 28 20 23Q19.5 21 21 19Z" fill="#d9dde9" />
    <path d="M14 15.5Q8 22 13 29Q17 34 21 33.5Q28 32 31.5 25.5Q22 30 16.5 25Q13 21 14 15.5Z" fill="#124f9c" />
  </svg>
);
const StoreIcon = () => (
  <svg width="32" height="34" viewBox="0 0 32 34">
    <defs><linearGradient id="st" x1="0" y1="0" x2="0" y2="1"><stop offset="0" stopColor="#0f68ad" /><stop offset="1" stopColor="#1b3d6e" /></linearGradient></defs>
    <path d="M9 6V2.5Q9 1 10.5 1H21.5Q23 1 23 2.5V6" fill="none" stroke="#4cc3ee" strokeWidth="2" />
    <path d="M0 5H32V30.5Q32 33 29.5 33H2.5Q0 33 0 30.5Z" fill="url(#st)" />
    <path d="M9 12H15.5V18.5H9Z" fill="#f25022" /><path d="M17 12H23.5V18.5H17Z" fill="#7fba00" /><path d="M9 20H15.5V26.5H9Z" fill="#00a4ef" /><path d="M17 20H23.5V26.5H17Z" fill="#ffb900" />
  </svg>
);
const ChromeIcon = () => (
  <svg width="34" height="34" viewBox="0 0 34 34">
    <circle cx="17" cy="17" r="17" fill="#fbc116" />
    <path d="M2.3 8.5A17 17 0 0 1 31.7 8.5H17A8.5 8.5 0 0 0 9.6 21.2Z" fill="#e33b2e" />
    <path d="M2.3 8.5L9.64 21.25A8.5 8.5 0 0 0 24.36 21.25L17 34A17 17 0 0 1 2.3 8.5Z" fill="#2a9a48" />
    <circle cx="17" cy="17" r="8.5" fill="#fff" /><circle cx="17" cy="17" r="6.7" fill="#3b78e7" />
  </svg>
);
const CloudOff = () => (
  <svg width="23" height="20" viewBox="0 0 23 20" fill="#b9bcc0" stroke="#2b2b2b" strokeWidth="1.6">
    <path d="M5.5 16.5Q1 16 1.2 11.8Q2 8.5 5 8.3Q6.5 3 11.5 3.2Q16 3.5 17 8Q21.5 8.5 21.8 12.5Q21.5 16.3 17.5 16.5Z" /><path d="M3 1.5L20.5 19" />
  </svg>
);
const PenIcon = () => (
  <svg width="24" height="24" viewBox="0 0 24 24" fill="none" stroke="#2b2b2b" strokeWidth="1.5">
    <path d="M7 17.5L8 13L17.5 2.8Q19.8 .8 21.6 2.5Q23.2 4.3 21.3 6.6L11.8 16.3L7 17.5ZM5.5 14Q1.5 15.5 1.5 18.5Q2 22 5.5 21.5L11 19.5Q12.5 22.5 15 21Q17 19.3 18.5 16.5Q19.5 14.5 16.5 13.5" />
  </svg>
);
const MonitorIcon = () => (
  <svg width="24" height="24" viewBox="0 0 24 24" fill="none" stroke="#2b2b2b" strokeWidth="1.5">
    <path d="M15 2H3Q1.5 2 1.5 3.5V15.5Q1.5 17 3 17H18.5V12M8 17V22M13 17V22M4.5 22H17" /><rect x="17" y="1" width="5.5" height="8" rx="1" /><path d="M19.7 9V20" />
  </svg>
);
const SoundIcon = () => (
  <svg width="24" height="20" viewBox="0 0 24 20" fill="none" stroke="#2b2b2b" strokeWidth="1.5">
    <path d="M1 7H4.5L9.5 2.5V17.5L4.5 13H1ZM13 6.5Q15 10 13 13.5M16.5 4Q20 10 16.5 16M20 2Q25 10 20 18" />
  </svg>
);
const BellIcon = () => (
  <svg width="20" height="24" viewBox="0 0 20 24">
    <path d="M0 17L2 14V8Q2.5 1.5 9 1.5Q16 1.5 16 8V14L18 17V19H0ZM6 20.5H12Q11 23 9 23Q7 23 6 20.5Z" fill="#1d1d1d" />
    <path d="M6 8H10.5L6 14H10.5" fill="none" stroke="#d4dfe8" strokeWidth="1.5" />
    <path d="M13.5 1.5H18.5V7H13.5Z" fill="#d4dfe8" stroke="#d4dfe8" strokeWidth="1.5" />
    <path d="M14 1.5H18.5L14 7H18.5" fill="none" stroke="#1d1d1d" strokeWidth="1.5" />
  </svg>
);
const Lens = () => (
  <svg width="21" height="22" viewBox="0 0 21 22" fill="none" stroke="#1d1d1d" strokeWidth="2.2"><circle cx="9" cy="9" r="7.8" /><path d="M14.5 15L20 21" /></svg>
);

const Taskbar = () => (
  <Bar>
    <Gap $w={29.5} /><WeatherIcon /><Gap $w={472} />
    <StartIcon /><Gap $w={20} />
    <BarSearch><Gap $w={15} /><Lens /><Gap $w={14.5} /><Label $f={UI} $s={17.5} $ls={-0.2} $dy={1} $c="#5c6064">Buscar</Label></BarSearch>
    <Gap $w={18} /><TaskViewIcon /><Gap $w={28} /><ExplorerIcon /><Gap $w={27} /><EdgeIcon /><Gap $w={27.5} /><StoreIcon />
    <Gap $w={15} /><RunningApp><EyeIcon w={34} h={34} /></RunningApp><Gap $w={4} />
    <AppButton><ChromeIcon /><AppBadge><Avatar $d={22} $s={13}>J</Avatar></AppBadge></AppButton>
    <Gap $w={154} /><Slot $w={44} $c="#2b2b2b"><Chevron up w={16} sw={1.9} /></Slot>
    <Slot $w={45}><CloudOff /></Slot><Slot $w={45}><PenIcon /></Slot><Slot $w={44}><MonitorIcon /></Slot><Slot $w={22}><SoundIcon /></Slot>
    <Spacer />
    <Clock>
      <Label $f={UI} $s={16} $ls={0.08}>11:02</Label>
      <Label $f={UI} $s={16} $ls={0.08}>26/09/2025</Label>
    </Clock>
    <Gap $w={12} /><BellIcon /><Gap $w={28} />
  </Bar>
);

export default function App() {
  return (
    <Screen>
      <Global />
      <TitleBar>
        <EyeIcon w={17} h={17} /><Gap $w={5} />
        <Label $f={UI} $s={12} $ls={-0.32} $c="#939393">Demo Veyon</Label>
        <Spacer />
        <Slot $w={46} $c="#8e8e8e"><svg width="10" height="10"><path d="M0 5H10" stroke="currentColor" /></svg></Slot>
        <Slot $w={46} $c="#8e8e8e"><svg width="10" height="10"><rect x=".5" y=".5" width="9" height="9" fill="none" stroke="currentColor" /></svg></Slot>
        <Slot $w={46} $c="#cfcfcf"><XIcon s={10} sw={1.3} /></Slot>
      </TitleBar>
      <Desktop>
        <SkyStrip />
        <FloorStrip />
        <ShortcutPeek $x={325} $c="#c8483f" />
        <ShortcutPeek $x={343} $c="#5c84bd" />
        <ShortcutName>Go</ShortcutName>
        <DriveWindow />
        <DocsWindow />
      </Desktop>
      <Taskbar />
    </Screen>
  );
}
